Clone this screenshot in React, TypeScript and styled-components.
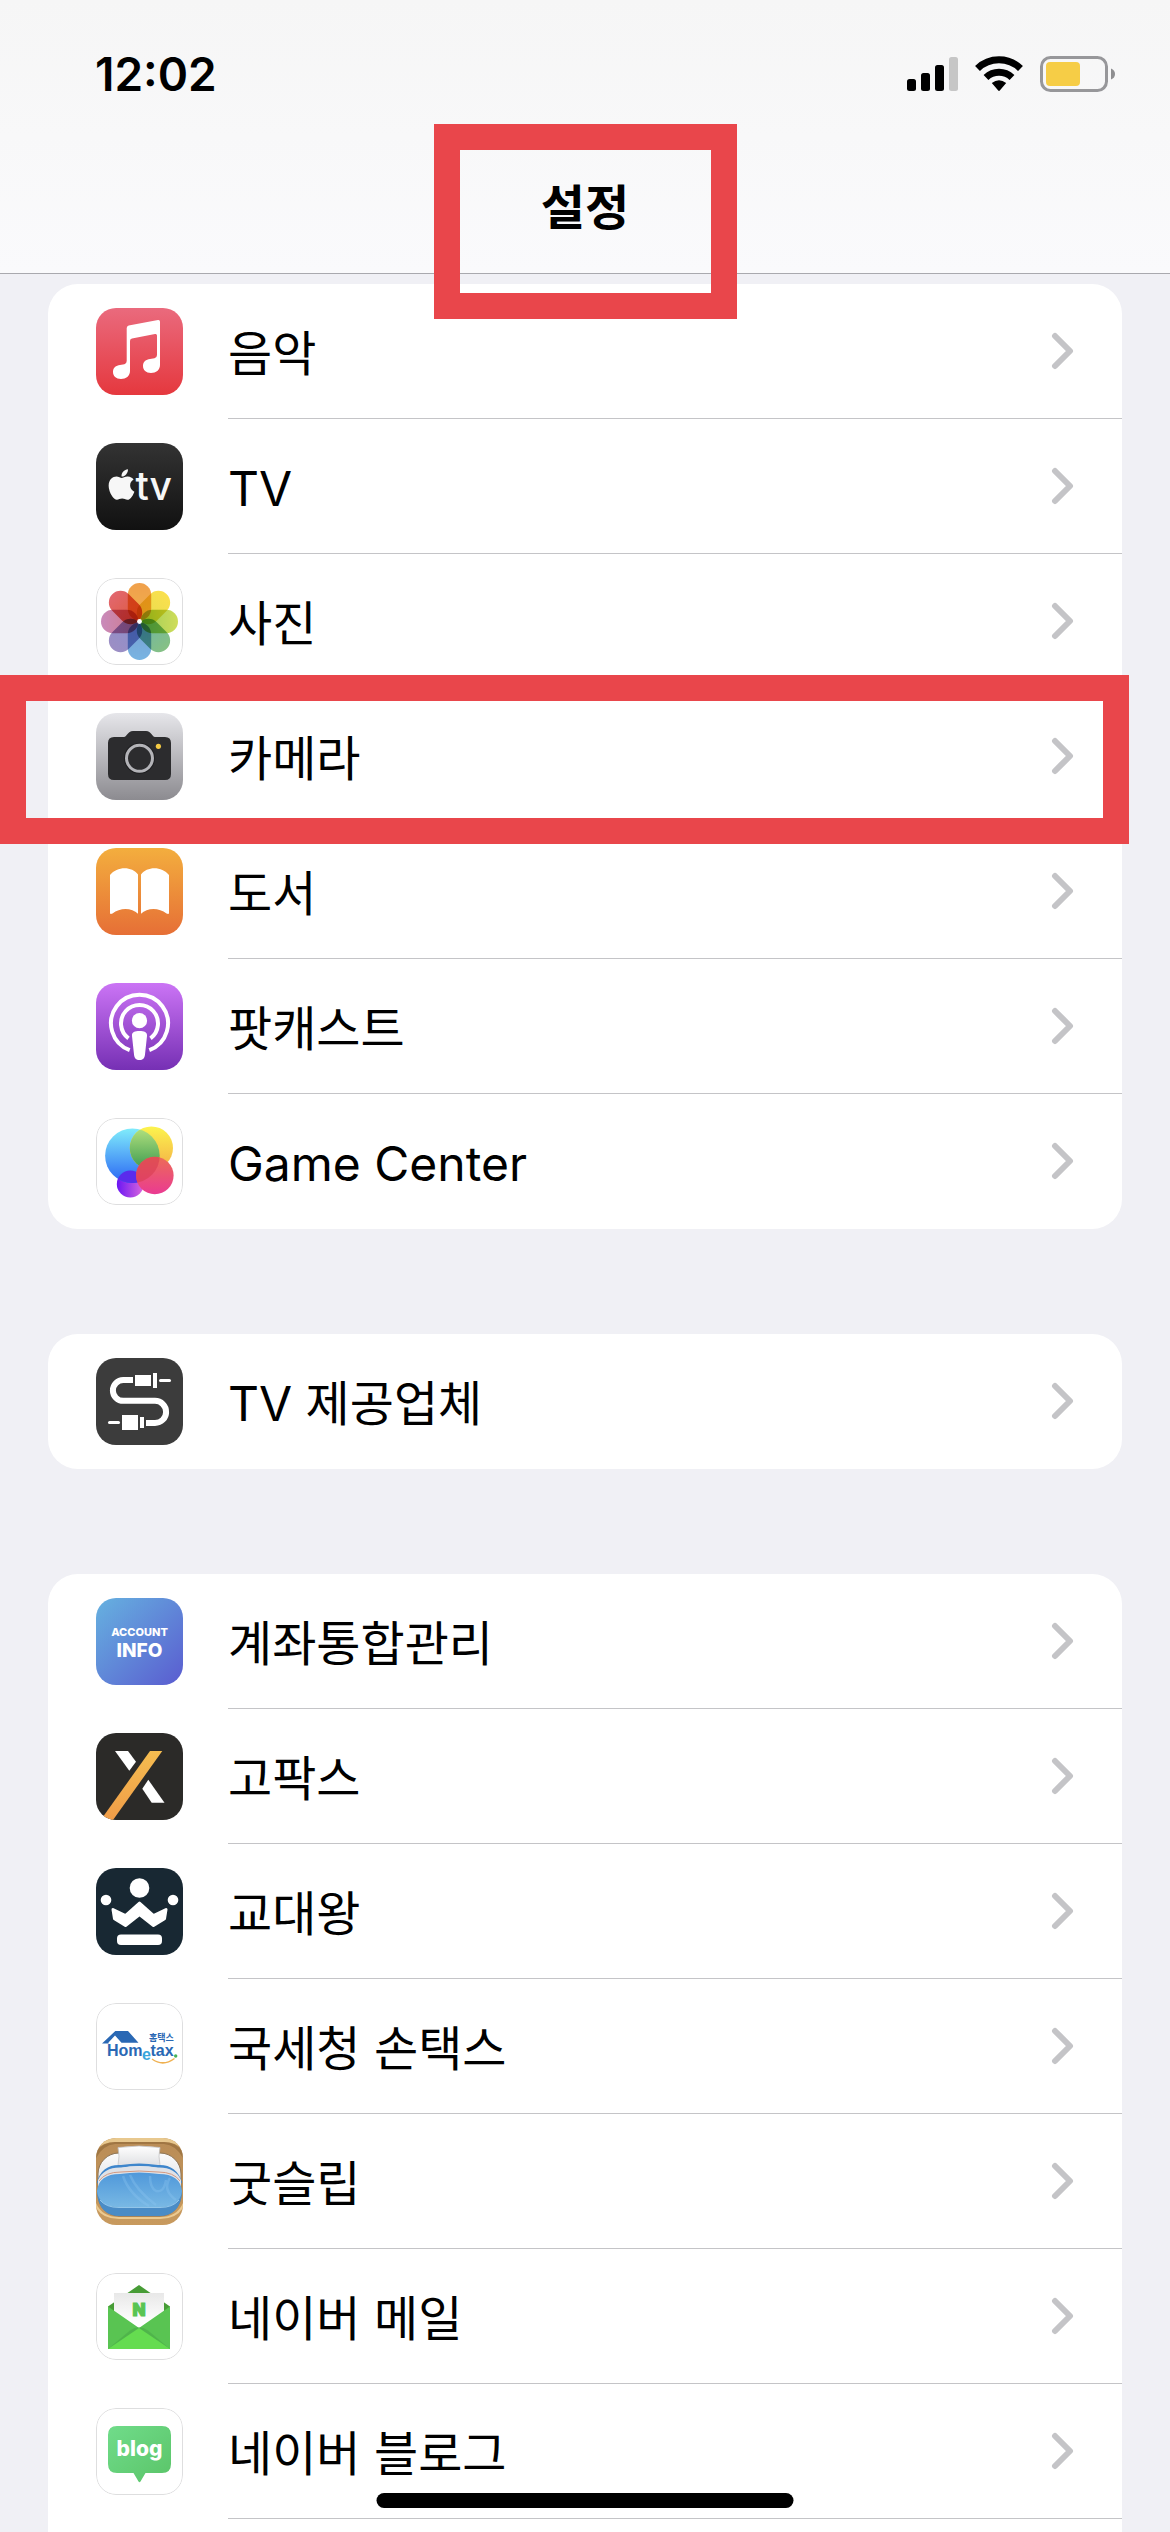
import React from "react";
import styled, { createGlobalStyle } from "styled-components";
import { FaApple } from "react-icons/fa";

const fontStack = `Inter, "Noto Sans CJK KR", sans-serif`;
const ink = "#000000";
const canvas = "#f0f0f5";
const hairline = "#c4c4c7";
const marker = "#e9464b";

const GlobalStyle = createGlobalStyle`
  *, *::before, *::after { box-sizing: border-box; }
  body {
    margin: 0;
    background: ${canvas};
    color: ${ink};
    font-family: ${fontStack};
  }
`;

/* ---------- layout ---------- */

const Page = styled.div`
  display: flex;
  flex-direction: column;
  height: 100vh;
  overflow: hidden;
  background: ${canvas};
`;

const Header = styled.header`
  display: flex;
  flex-direction: column;
  flex: none;
  border-bottom: 1px solid #a9a9ae;
  background: linear-gradient(#f6f6f6, #fafafc);
`;

const StatusBar = styled.div`
  display: flex;
  align-items: center;
  justify-content: space-between;
  height: 148px;
  padding: 0 55px 0 95px;
`;

const Clock = styled.time`
  font-size: 46px;
  line-height: 56px;
  font-weight: 600;
`;

const StatusIcons = styled.svg`
  width: 208px;
  height: 36px;
`;

const TitleBar = styled.div`
  display: flex;
  justify-content: center;
  height: 125px;
`;

const Title = styled.h1`
  position: relative;
  margin: 0;
  padding: 28px 0 0;
  font-size: 48px;
  line-height: 64px;
  font-weight: 600;
`;

const Highlight = styled.span<{ $inset: string }>`
  position: absolute;
  inset: ${(p) => p.$inset};
  z-index: 2;
  border: 26px solid ${marker};
  pointer-events: none;
`;

const List = styled.main`
  display: flex;
  flex: 1;
  flex-direction: column;
  gap: 105px;
  padding: 10px 48px 0;
`;

const Group = styled.ul<{ $continues?: boolean }>`
  flex: ${(p) => (p.$continues ? "1 0 auto" : "none")};
  margin: 0;
  padding: 0;
  list-style: none;
  background: #ffffff;
  border-radius: ${(p) => (p.$continues ? "30px 30px 0 0" : "30px")};
`;

const Row = styled.li`
  position: relative;
`;

const RowLink = styled.a`
  display: flex;
  align-items: center;
  gap: 45px;
  height: 135px;
  padding-left: 48px;
  color: inherit;
  text-decoration: none;
`;

const RowBody = styled.span<{ $divided: boolean }>`
  display: flex;
  flex: 1;
  align-items: center;
  justify-content: space-between;
  height: 100%;
  padding-right: 48px;
  border-bottom: 1px solid ${(p) => (p.$divided ? hairline : "transparent")};
`;

const Label = styled.span`
  padding-top: 6px;
  font-size: 48px;
  line-height: 64px;
`;

const ChevronSvg = styled.svg`
  width: 24px;
  height: 38px;
`;

const HomeIndicator = styled.div`
  position: fixed;
  bottom: 24px;
  left: 50%;
  z-index: 3;
  width: 417px;
  height: 15px;
  border-radius: 8px;
  background: ${ink};
  transform: translateX(-50%);
`;

/* ---------- icons ---------- */

const IconSvg = styled.svg`
  flex: none;
  width: 87px;
  height: 87px;
  border-radius: 20px;
  isolation: isolate;
  font-family: ${fontStack};
`;

const Petal = styled.rect`
  mix-blend-mode: multiply;
`;

const HometaxText = styled.text`
  font-family: "Liberation Sans", sans-serif;
  font-size: 16px;
  font-weight: 700;
`;

type TileProps = { fill?: string; outlined?: boolean; children: React.ReactNode };

const Tile = ({ fill = "#ffffff", outlined, children }: TileProps) => (
  <IconSvg viewBox="0 0 87 87" aria-hidden="true">
    <rect width="87" height="87" fill={fill} />
    {children}
    {outlined && (
      <rect x="0.5" y="0.5" width="86" height="86" rx="19.5" fill="none" stroke="#dededf" />
    )}
  </IconSvg>
);

type FadeProps = { id: string; from: string; to: string; diagonal?: boolean; flat?: boolean };

const Fade = ({ id, from, to, diagonal, flat }: FadeProps) => (
  <linearGradient id={id} x1="0" y1="0" x2={diagonal || flat ? "1" : "0"} y2={flat ? "0" : "1"}>
    <stop offset="0" stopColor={from} />
    <stop offset="1" stopColor={to} />
  </linearGradient>
);

const MusicIcon = () => (
  <Tile fill="url(#music)">
    <defs><Fade id="music" from="#ea6a7d" to="#e5383e" /></defs>
    <path
      fill="#fff"
      d="M30.7 20Q30.7 18 32.7 17.5L62 12Q64 11.7 64 13.7V57C64 62 60 65 55 65C50 65 47 62 47 58C47 53.5 50 51.6 54 51L58.5 50.2Q61 49.6 61 47V27.5Q61 25.6 59 26L36 30.6Q34 31 34 33V63C34 68 30 71 25 71C20 71 17 68 17 64C17 59.5 20 57.6 24 57L28.4 56.2Q30.7 55.5 30.7 53Z"
    />
  </Tile>
);

const TvIcon = () => (
  <Tile fill="url(#tv)">
    <defs><Fade id="tv" from="#333333" to="#111111" /></defs>
    <FaApple x="8" y="24" size={35} color="#f7f7f7" />
    <text x="39.5" y="57" fontSize="39" fontWeight="500" fill="#f7f7f7">tv</text>
  </Tile>
);

const petals = [
  ["#f0a04c", "#f0b04c"],
  ["#fae04e", "#e6dc50"],
  ["#cfdd5a", "#9ccb58"],
  ["#86c184", "#6fb4a8"],
  ["#78b4e2", "#7a9ed0"],
  ["#9c8ec4", "#8c90cc"],
  ["#c98abb", "#d07a88"],
  ["#e2676e", "#dd5a3c"],
];

const PhotosIcon = () => (
  <Tile outlined>
    <defs>
      {petals.map(([from, to], i) => <Fade key={i} id={`petal${i}`} from={from} to={to} />)}
    </defs>
    {petals.map((_, i) => (
      <Petal
        key={i}
        x="31.8"
        y="5"
        width="23.4"
        height="37.5"
        rx="11.7"
        fill={`url(#petal${i})`}
        transform={`rotate(${i * 45} 43.5 43.5)`}
      />
    ))}
    <circle cx="43.5" cy="43.5" r="2.4" fill="#fff" />
  </Tile>
);

const CameraIcon = () => (
  <Tile fill="url(#camera)">
    <defs><Fade id="camera" from="#e6e6ea" to="#8c8b90" /></defs>
    <path
      fill="#2c2c2e"
      d="M18 24H28C31 24 31.5 18 37 18H50C55.5 18 56 24 59 24H69Q75 24 75 30V61Q75 67 69 67H18Q12 67 12 61V30Q12 24 18 24Z"
    />
    <circle cx="43.5" cy="45.3" r="15.5" fill="#1f1f21" />
    <circle cx="43.5" cy="45.3" r="13" fill="#2c2c2e" stroke="#b4b4b8" strokeWidth="3" />
    <circle cx="62.4" cy="33.3" r="2.6" fill="#f4ca44" />
  </Tile>
);

const BooksIcon = () => (
  <Tile fill="url(#books)">
    <defs><Fade id="books" from="#f3ae3e" to="#e66f36" /></defs>
    <path fill="#fff" d="M14 27C21 18 36 18 42 26.5V65.7C36 59.7 24 59.2 16.5 65.6Q14 66.5 14 65Z" />
    <path fill="#fff" d="M73 27C66 18 51 18 45 26.5V65.7C51 59.7 63 59.2 70.5 65.6Q73 66.5 73 65Z" />
  </Tile>
);

const PodcastIcon = () => (
  <Tile fill="url(#podcast)">
    <defs><Fade id="podcast" from="#cb74f5" to="#7630b4" /></defs>
    <g fill="none" stroke="#fff" strokeWidth="4">
      <path d="M33.7 67.1A28.5 28.5 0 1 1 53.3 67.1" />
      <path d="M32.5 55.3A18.5 18.5 0 1 1 54.5 55.3" />
    </g>
    <circle cx="43.5" cy="37.7" r="7.6" fill="#fff" />
    <path fill="#fff" d="M36 53C35.5 49 39 48 43.5 48S51.5 49 51 53L49 71.5C48.5 75.5 47 77 43.5 77S38.5 75.5 38 71.5Z" />
  </Tile>
);

const GameCenterIcon = () => (
  <Tile outlined>
    <defs>
      <Fade id="gcBlue" from="#80ecfb" to="#2a66f4" />
      <Fade id="gcYellow" from="#fcf44e" to="#f4ae46" />
      <Fade id="gcGreen" from="#b8e480" to="#3c9a50" />
      <Fade id="gcRed" from="#ec6c56" to="#ea3a92" />
      <Fade id="gcPurple" from="#6a16f4" to="#dc68dc" flat />
      <clipPath id="gcClip"><circle cx="36.4" cy="37.7" r="27.3" /></clipPath>
    </defs>
    <circle cx="34.3" cy="66" r="13.5" fill="url(#gcPurple)" />
    <circle cx="36.4" cy="37.7" r="27.3" fill="url(#gcBlue)" />
    <circle cx="34.3" cy="66" r="13.5" fill="#5a2cec" clipPath="url(#gcClip)" />
    <circle cx="55.4" cy="30" r="21.6" fill="url(#gcYellow)" />
    <circle cx="55.4" cy="30" r="21.6" fill="url(#gcGreen)" clipPath="url(#gcClip)" />
    <circle cx="58.8" cy="57.5" r="18.8" fill="url(#gcRed)" />
    <circle cx="58.8" cy="57.5" r="18.8" fill="#d83c52" opacity="0.6" clipPath="url(#gcClip)" />
  </Tile>
);

const ProviderIcon = () => (
  <Tile fill="#3c3c3c">
    <path
      fill="none"
      stroke="#fff"
      strokeWidth="6"
      d="M37 22H27.3A10.4 10.4 0 0 0 27.3 42.8H59A11.1 11.1 0 0 1 59 65H50"
    />
    <g fill="#fff">
      <rect x="39" y="17" width="16" height="11" />
      <rect x="57" y="15" width="4" height="15" />
      <rect x="63" y="21" width="12" height="3" rx="1.5" />
      <rect x="12" y="63" width="12" height="3" rx="1.5" />
      <rect x="26" y="57" width="16" height="15" />
      <rect x="44" y="59" width="4" height="11" />
    </g>
  </Tile>
);

const AccountIcon = () => (
  <Tile fill="url(#account)">
    <defs><Fade id="account" from="#66b2e0" to="#5a5cd0" diagonal /></defs>
    <g fill="#fff" textAnchor="middle" fontWeight="800">
      <text x="43.5" y="38" fontSize="11">ACCOUNT</text>
      <text x="43.5" y="59" fontSize="19">INFO</text>
    </g>
  </Tile>
);

const GopaxIcon = () => (
  <Tile fill="#2b2a28">
    <defs><Fade id="gopax" from="#f5bd50" to="#f09c48" /></defs>
    <path fill="#fff" d="M19 18H32L40 28.7L33.3 37.7Z" />
    <path fill="#fff" d="M52.3 46.7L68.5 69.7H55.7L46.3 55.7Z" />
    <path fill="url(#gopax)" d="M54 18H66.3L17 87H4.7Z" />
  </Tile>
);

const CrownIcon = () => (
  <Tile fill="#182833">
    <g fill="#fff">
      <circle cx="43.5" cy="20" r="9.8" />
      <circle cx="10" cy="32" r="5.3" />
      <circle cx="77" cy="32" r="5.3" />
      <path
        stroke="#fff"
        strokeWidth="3"
        strokeLinejoin="round"
        d="M17 41.5L29.5 47.5L43.5 35L57.5 47.5L70 41.5L68.5 50.8L57.5 57.5L43.5 46.5L29.5 57.5L18.5 50.8Z"
      />
      <rect x="21" y="66.5" width="45" height="10.5" rx="4" />
    </g>
  </Tile>
);

const HometaxIcon = () => (
  <Tile outlined>
    <path fill="#2a68b4" d="M6 40.5L19.3 28H32L42.5 39.7H25.5L19 32.5L12.5 39.5V40.5Z" />
    <text x="53" y="38" fontSize="9" fontWeight="700" fill="#2a68b4">홈택스</text>
    <HometaxText x="11" y="52.7" fill="#2a68b4">Hom</HometaxText>
    <HometaxText x="46" y="57" fill="#3aa6dc">e</HometaxText>
    <HometaxText x="54.5" y="52.7" fill="#2a68b4">tax</HometaxText>
    <circle cx="79.7" cy="53" r="1.7" fill="#46b258" />
    <path fill="none" stroke="#efb050" strokeWidth="1.5" d="M56 56Q67 64 78.5 55.5" />
  </Tile>
);

const SleepIcon = () => (
  <Tile fill="url(#wood)">
    <defs>
      <Fade id="wood" from="#b98c56" to="#c89a5e" />
      <Fade id="sheet" from="#fbfbfb" to="#c6c9ce" />
      <Fade id="blanket" from="#4f98da" to="#78b8e4" />
      <Fade id="pillow" from="#ffffff" to="#dfe0e3" />
    </defs>
    <path fill="#e8c88e" d="M0 0H87V12Q80 4 68 4H19Q7 4 0 12Z" />
    <path fill="#86602f" opacity="0.5" d="M0 14Q7 4 19 4H68Q80 4 87 14V20Q80 7 68 6H19Q7 7 0 20Z" />
    <rect x="2" y="15" width="83" height="63" rx="21" fill="url(#sheet)" stroke="#8b7355" strokeWidth="1" />
    <path fill="url(#pillow)" stroke="#c4c4c6" strokeWidth="0.8" d="M22 9.5Q43 6.5 64 9.5Q62 18 64 27.5H22Q24 18 22 9.5Z" />
    <path fill="#4a8cc6" d="M1 52V55Q3 78 24 78H63Q84 78 86 55V52Z" />
    <path fill="#3e86cc" d="M1 44Q6 26 25 27Q43 24 62 27Q80 26 86 44L85 46Q78 30 62 30Q43 26 25 30Q8 30 2 46Z" />
    <path fill="#dfe2e8" d="M2 42Q8 29 25 29.5Q43 27 62 29.5Q79 29 85 42V48H2Z" />
    <path fill="none" stroke="#d49a82" strokeWidth="1" d="M3 43Q9 34 25 34Q43 32 62 34Q78 34 84 43" />
    <path fill="url(#blanket)" d="M1 53Q3 36 24 36Q43 33 63 36Q84 36 86 53Q84 69 64 69H23Q3 69 1 53Z" />
    <g fill="none" stroke="#8ec6f0" strokeWidth="2.5" opacity="0.35">
      <path d="M27 38Q33 56 53 68" />
      <path d="M34 37Q40 52 60 67" />
      <path d="M54 38Q54 50 60 53Q68 55 70 42" />
      <path d="M74 40Q66 52 80 62" />
    </g>
    <path fill="none" stroke="#a5d4f2" strokeWidth="0.8" d="M4 62Q10 69.5 23 69.5H64Q77 69.5 83 62" />
    <path fill="#ecca90" d="M0 65Q6 79 23 79H64Q81 79 87 65V70Q80 81 64 81H23Q7 81 0 70Z" />
  </Tile>
);

const MailIcon = () => (
  <Tile outlined>
    <defs><Fade id="paper" from="#e8e8e8" to="#ffffff" /></defs>
    <path fill="#479c36" d="M43 12L74 33.5V40H12V33.5Z" />
    <path fill="url(#paper)" d="M18 20H68V50H18Z" />
    <path fill="#59c452" d="M12 33.5L43 55L74 33.5V76H12Z" />
    <path fill="#4cae48" d="M12 76L34 57.5Q43 51 52 57.5L74 76Z" opacity="0.7" />
    <path fill="#65dc50" d="M12 76L43 55L74 76Z" />
    <text x="43" y="43" fontSize="17" fontWeight="900" fill="#59c452" stroke="#59c452" textAnchor="middle">N</text>
  </Tile>
);

const BlogIcon = () => (
  <Tile outlined>
    <defs><Fade id="blog" from="#70dc8a" to="#5ac468" diagonal /></defs>
    <path
      fill="url(#blog)"
      d="M21 18H66Q75 18 75 27V56Q75 65 66 65H49.5L44.5 73.5Q43.5 75 42.5 73.5L37.5 65H21Q12 65 12 56V27Q12 18 21 18Z"
    />
    <text x="43.5" y="48" fontSize="21" fontWeight="800" fill="#fff" textAnchor="middle">blog</text>
  </Tile>
);

const Chevron = () => (
  <ChevronSvg viewBox="0 0 24 38" aria-hidden="true">
    <path d="M5 4L20 19L5 34" fill="none" stroke="#c4c4c7" strokeWidth="6" strokeLinecap="round" strokeLinejoin="round" />
  </ChevronSvg>
);

const StatusGlyphs = () => (
  <StatusIcons viewBox="0 0 208 36" role="img" aria-label="signal, wifi, battery">
    <rect x="0" y="23" width="9" height="12" rx="2.5" />
    <rect x="14" y="17" width="9" height="18" rx="2.5" />
    <rect x="28" y="9" width="9" height="26" rx="2.5" />
    <rect x="42" y="1" width="9" height="34" rx="2.5" fill="#c6c6c6" />
    <g fill="none" stroke="#000" strokeWidth="7">
      <path d="M70.5 12.5A31 31 0 0 1 113.5 12.5" />
      <path d="M79 21.5A19 19 0 0 1 105 21.5" />
    </g>
    <path d="M84.8 27Q92 21.5 99.2 27L93 34.3Q92 35.5 91 34.3Z" />
    <rect x="134.5" y="1.5" width="65" height="33" rx="9" fill="none" stroke="#97979a" strokeWidth="3" />
    <rect x="139" y="6" width="34" height="24" rx="4" fill="#f6cd46" />
    <path d="M204 12.5Q208 14 208 18T204 23.5Z" fill="#8e8e90" />
  </StatusIcons>
);

/* ---------- content ---------- */

type Item = { label: string; Icon: React.FC; highlighted?: boolean };

const appleApps: Item[] = [
  { label: "음악", Icon: MusicIcon },
  { label: "TV", Icon: TvIcon },
  { label: "사진", Icon: PhotosIcon },
  { label: "카메라", Icon: CameraIcon, highlighted: true },
  { label: "도서", Icon: BooksIcon },
  { label: "팟캐스트", Icon: PodcastIcon },
  { label: "Game Center", Icon: GameCenterIcon },
];

const providers: Item[] = [{ label: "TV 제공업체", Icon: ProviderIcon }];

const installedApps: Item[] = [
  { label: "계좌통합관리", Icon: AccountIcon },
  { label: "고팍스", Icon: GopaxIcon },
  { label: "교대왕", Icon: CrownIcon },
  { label: "국세청 손택스", Icon: HometaxIcon },
  { label: "굿슬립", Icon: SleepIcon },
  { label: "네이버 메일", Icon: MailIcon },
  { label: "네이버 블로그", Icon: BlogIcon },
];

const SettingsGroup = ({ items, continues }: { items: Item[]; continues?: boolean }) => (
  <Group $continues={continues}>
    {items.map(({ label, Icon, highlighted }, i) => (
      <Row key={label}>
        <RowLink href="#">
          <Icon />
          <RowBody $divided={continues || i < items.length - 1}>
            <Label>{label}</Label>
            <Chevron />
          </RowBody>
        </RowLink>
        {highlighted && <Highlight $inset="-14px -7px -20px -48px" />}
      </Row>
    ))}
  </Group>
);

export default function App() {
  return (
    <Page lang="ko">
      <GlobalStyle />
      <Header>
        <StatusBar>
          <Clock>12:02</Clock>
          <StatusGlyphs />
        </StatusBar>
        <TitleBar>
          <Title>
            설정
            <Highlight $inset="-24px -108px -46px -107px" />
          </Title>
        </TitleBar>
      </Header>
      <List>
        <SettingsGroup items={appleApps} />
        <SettingsGroup items={providers} />
        <SettingsGroup items={installedApps} continues />
      </List>
      <HomeIndicator />
    </Page>
  );
}
